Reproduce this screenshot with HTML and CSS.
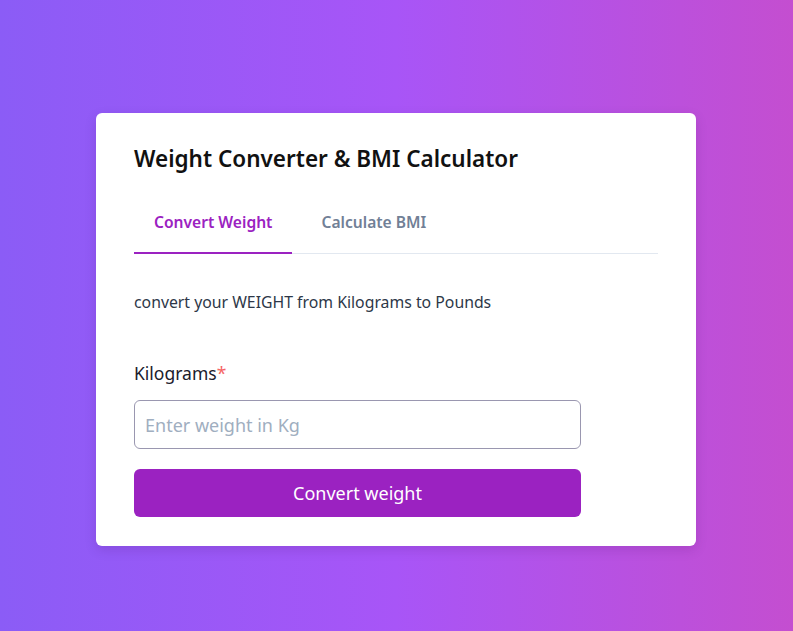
FILE: index.html
```html
<!DOCTYPE html>
<html lang="en">
<head>
<meta charset="utf-8">
<title>Weight Converter & BMI Calculator</title>
<link rel="stylesheet" href="styles.css">
</head>
<body>
<main class="page">
  <section class="card">
    <h1 class="title">Weight Converter &amp; BMI Calculator</h1>
    <nav class="tabs">
      <button class="tab active">Convert Weight</button>
      <button class="tab">Calculate BMI</button>
    </nav>
    <p class="desc">convert your WEIGHT from Kilograms to Pounds</p>
    <form class="form">
      <label class="label" for="kg">Kilograms<span class="req">*</span></label>
      <input class="input" id="kg" type="text" placeholder="Enter weight in Kg">
      <button class="btn" type="button">Convert weight</button>
    </form>
  </section>
</main>
</body>
</html>
```
FILE: styles.css
```css
* { box-sizing: border-box; }
html, body { margin: 0; height: 100%; }
body {
  font-family: "Noto Sans", "Open Sans", sans-serif;
  background: linear-gradient(to right, #8b5cf6, #a855f7 50%, #c44ed0);
}
.page {
  height: 100%;
  display: flex;
  justify-content: center;
  padding-top: 113px;
  padding-right: 1px;
}
.card {
  width: 600px;
  height: 433px;
  background: #fff;
  border-radius: 6px;
  padding: 31px 38px 0;
  box-shadow: 0 4px 12px rgba(60, 0, 90, 0.15);
}
.title {
  margin: 0;
  font-size: 22.5px;
  font-weight: 600;
  color: #111;
  line-height: 30px;
}
.tabs {
  display: flex;
  margin-top: 30px;
  border-bottom: 1px solid #e2e8f0;
}
.tab {
  font-family: inherit;
  background: none;
  border: none;
  border-bottom: 2px solid transparent;
  margin-bottom: -1px;
  padding: 7px 20px 19px;
  font-size: 15.6px;
  font-weight: 600;
  color: #718096;
  line-height: 22px;
  margin-right: 9px;
}
.tab.active {
  color: #9b22c1;
  border-bottom-color: #9b22c1;
}
.desc {
  margin: 37px 0 0;
  font-size: 15.8px;
  color: #2d3748;
  line-height: 22px;
}
.form {
  display: flex;
  flex-direction: column;
  width: 447px;
  margin-top: 48px;
}
.label {
  font-size: 17.5px;
  color: #1a202c;
  line-height: 24px;
  margin-bottom: 15px;
}
.req { color: #f56565; }
.input {
  height: 49px;
  border: 1px solid #9a97b0;
  border-radius: 6px;
  padding: 0 10px;
  font-family: inherit;
  font-size: 18px;
  color: #1a202c;
  outline: none;
}
.input::placeholder { color: #a0aec0; }
.btn {
  margin-top: 20px;
  height: 48px;
  border: none;
  border-radius: 6px;
  background: #9b22c1;
  color: #fff;
  font-family: inherit;
  font-size: 18px;
}
```
